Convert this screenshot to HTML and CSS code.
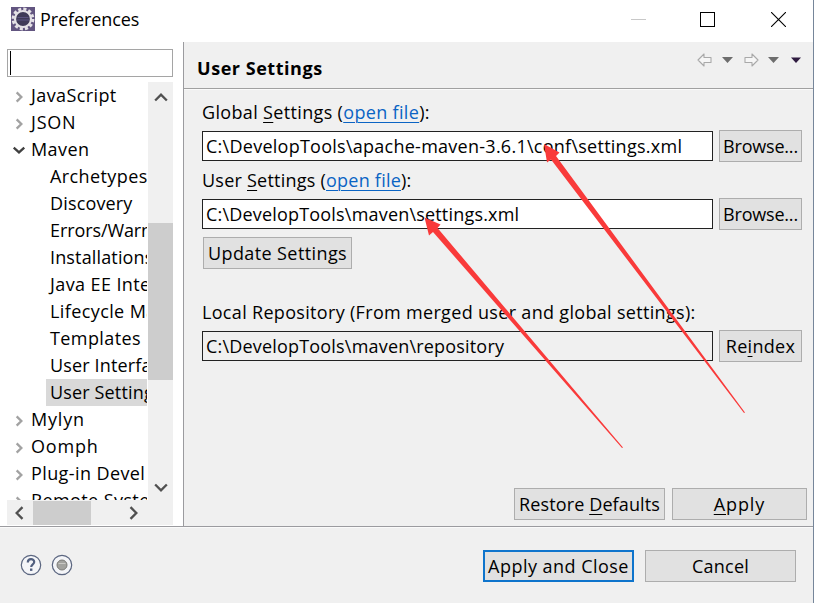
FILE: index.html
```html
<!DOCTYPE html>
<html lang="en">
<head>
<meta charset="utf-8">
<title>Preferences</title>
<link rel="stylesheet" href="styles.css">
</head>
<body>
<div class="window">
  <header class="titlebar">
    <svg class="app-icon" width="24" height="24" viewBox="0 0 24 24">
      <rect width="24" height="24" fill="#625580"/>
      <circle cx="12" cy="12" r="9.900" fill="none" stroke="#e4e1e6" stroke-width="3" stroke-dasharray="3.100 2.083"/>
      <circle cx="12" cy="12" r="8" fill="#3f3a58" stroke="#e4e1e6" stroke-width="2.200"/>
      <path d="M6.500 10.500h11M6 13h12" stroke="#5b5380" stroke-width="1"/>
    </svg>
    <h1 class="caption">Preferences</h1>
    <div class="window-controls">
      <svg width="15" height="15" viewBox="0 0 15 15"><path d="M0 7.500h15" stroke="#c8c8c8"/></svg>
      <svg width="15" height="15" viewBox="0 0 15 15"><rect x=".5" y=".5" width="14" height="14" fill="none" stroke="#000"/></svg>
      <svg width="15" height="15" viewBox="0 0 15 15"><path d="M0 0l15 15M15 0L0 15" stroke="#000" stroke-width="1.100"/></svg>
    </div>
  </header>

  <div class="main">
    <aside class="sidebar">
      <div class="filter"><span class="caret"></span></div>
      <div class="tree-pane">
        <ul class="tree">
          <li class="node"><svg class="chev" viewBox="0 0 12 12"><path d="M4 2l4 4-4 4"/></svg><span>JavaScript</span></li>
          <li class="node wide"><svg class="chev" viewBox="0 0 12 12"><path d="M4 2l4 4-4 4"/></svg><span>JSON</span></li>
          <li class="node"><svg class="chev open" viewBox="0 0 12 12"><path d="M1.500 4l4.500 4 4.500-4"/></svg><span>Maven</span></li>
          <li class="node child"><span>Archetypes</span></li>
          <li class="node child tight"><span>Discovery</span></li>
          <li class="node child narrow"><span>Errors/Warnings</span></li>
          <li class="node child tight"><span>Installations</span></li>
          <li class="node child"><span>Java EE Integration</span></li>
          <li class="node child"><span>Lifecycle Mappings</span></li>
          <li class="node child"><span>Templates</span></li>
          <li class="node child tight"><span>User Interface</span></li>
          <li class="node child selected tight"><span>User Settings</span></li>
          <li class="node wide"><svg class="chev" viewBox="0 0 12 12"><path d="M4 2l4 4-4 4"/></svg><span>Mylyn</span></li>
          <li class="node wide"><svg class="chev" viewBox="0 0 12 12"><path d="M4 2l4 4-4 4"/></svg><span>Oomph</span></li>
          <li class="node"><svg class="chev" viewBox="0 0 12 12"><path d="M4 2l4 4-4 4"/></svg><span>Plug-in Devel</span></li>
          <li class="node"><svg class="chev" viewBox="0 0 12 12"><path d="M4 2l4 4-4 4"/></svg><span>Remote Systems</span></li>
        </ul>
        <div class="vscroll">
          <svg class="sarrow" viewBox="0 0 12 12"><path d="M1 9l5-5 5 5"/></svg>
          <div class="vthumb"></div>
          <svg class="sarrow" viewBox="0 0 12 12"><path d="M1 3l5 5 5-5"/></svg>
        </div>
      </div>
      <div class="hscroll">
        <svg class="sarrow" viewBox="0 0 12 12"><path d="M9 1L4 6l5 5"/></svg>
        <div class="hthumb"></div>
        <svg class="sarrow" viewBox="0 0 12 12"><path d="M3 1l5 5-5 5"/></svg>
      </div>
    </aside>

    <section class="page">
      <div class="page-head">
        <h2 class="heading">User Settings</h2>
        <svg class="nav" width="106" height="14" viewBox="0 0 106 14">
          <g fill="#f6f6f6" stroke="#a9a9a9" stroke-width="1.100" stroke-linejoin="round">
            <path d="M1 7l6-6v3.500h7v5H7V13z"/>
            <path d="M61 7l-6-6v3.500h-7v5h7V13z"/>
          </g>
          <path d="M25 4h11l-5.500 6zM71 4h11l-5.500 6z" fill="#6d6d6d"/>
          <path d="M94 4.500h10l-5 5.500z" fill="#2f1b40"/>
        </svg>
      </div>
      <div class="form">
        <p class="label l1">Global <u>S</u>ettings (<a>open file</a>):</p>
        <div class="row"><div class="field f1">C:\DevelopTools\apache-maven-3.6.1\conf\settings.xml</div><button class="btn side">Browse...</button></div>
        <p class="label l2">User <u>S</u>ettings (<a>open file</a>):</p>
        <div class="row"><div class="field f2">C:\DevelopTools\maven\settings.xml</div><button class="btn side">Browse...</button></div>
        <button class="btn update">Update Settings</button>
        <p class="label l3">Local Repository (From merged user and global settings):</p>
        <div class="row"><div class="field readonly">C:\DevelopTools\maven\repository</div><button class="btn side reindex">Re<u>i</u>ndex</button></div>
      </div>
      <div class="page-actions">
        <button class="btn restore">Restore <u>D</u>efaults</button>
        <button class="btn apply"><u>A</u>pply</button>
      </div>
    </section>
  </div>

  <footer class="footer">
    <svg class="help" width="54" height="22" viewBox="0 0 54 22">
      <g fill="#f4f5f8" stroke="#5b6680" stroke-width="1.200"><circle cx="11" cy="11" r="9.700"/><circle cx="42" cy="11" r="9.700"/></g>
      <path d="M7.800 8.500c0-4.300 6.400-4.300 6.400-.5 0 2.300-3 2.400-3 5" fill="none" stroke="#526080" stroke-width="2.200"/>
      <rect x="10" y="14.500" width="2.400" height="2.400" fill="#526080"/>
      <circle cx="42" cy="11" r="5" fill="#a3a39f" stroke="#7c7c78"/>
      <path d="M38.500 9.500h7" stroke="#c9c9c5"/>
    </svg>
    <button class="btn primary">Apply and Close</button>
    <button class="btn cancel">Cancel</button>
  </footer>

  <svg class="annotations" width="814" height="603" viewBox="0 0 814 603">
    <path d="M544 144L559.500 152.500 556 156 745 412.500 744 413 551 159.500 547 162.500z"/>
    <path d="M424.500 217.500L440.500 224.500 437.500 228 623 447.500 622 448 433 232 429 235.500z"/>
  </svg>
</div>
</body>
</html>
```
FILE: styles.css
```css
* { box-sizing: border-box; }
body { margin: 0; font-family: "Open Sans", "Noto Sans", sans-serif; font-size: 18px; color: #000; }
h1, h2, p, ul { margin: 0; padding: 0; font-weight: 400; font-size: inherit; }
svg { display: block; flex: none; }
u { text-decoration-thickness: 1px; text-underline-offset: 3px; }

.window { position: relative; width: 814px; height: 603px; overflow: hidden; background: #f0f0f0; border-right: 1px solid #76869a; display: flex; flex-direction: column; }
.titlebar { height: 42px; flex: none; background: #fff; display: flex; align-items: center; padding: 0 27px 4px 11px; }
.caption { margin-left: 5px; line-height: 24px; flex: 1; white-space: nowrap; letter-spacing: -.1px; }
.window-controls { display: flex; gap: 54px; }
.window-controls svg:last-child { margin-left: 2px; }

.main { height: 485px; flex: none; display: flex; border-bottom: 1px solid #9b9b9f; }
.sidebar { width: 184px; flex: none; background: #fff; border-right: 1px solid #9b9b9f; padding: 7px 10px 0 7px; }
.filter { width: 166px; height: 28px; border: 1px solid #a5a5a5; padding: 1px 2px; }
.caret { display: block; width: 1px; height: 24px; background: #000; }
.tree-pane { margin-top: 5px; height: 418px; width: 166px; display: flex; justify-content: space-between; }
.tree { width: 140px; flex: none; overflow: hidden; list-style: none; letter-spacing: .4px; }
.node { height: 27px; display: flex; align-items: center; line-height: 27px; white-space: nowrap; padding-left: 5px; }
.node span { padding-left: 5px; }
.wide { letter-spacing: .8px; }
.tight { letter-spacing: .15px; }
.narrow { letter-spacing: -.1px; }
.child { padding-left: 39px; }
.child span { padding-left: 4px; }
.selected span { background: #d9d9d9; flex: none; }
.chev { width: 14px; height: 14px; fill: none; stroke: #a2a2a2; stroke-width: 2; margin-top: 3px; }
.chev.open { stroke: #404040; margin-top: 1px; }
.vscroll { width: 25px; background: #f0f0f0; display: flex; flex-direction: column; align-items: center; padding: 8px 0 5px; }
.sarrow { width: 14px; height: 14px; fill: none; stroke: #505050; stroke-width: 2; }
.vthumb { width: 25px; height: 157px; margin: 119px 0 auto; background: #cdcdcd; }
.hscroll { height: 25px; width: 166px; background: #f0f0f0; display: flex; align-items: center; padding-left: 5px; }
.hthumb { width: 58px; height: 24px; margin: 0 36px 0 7px; background: #cdcdcd; }

.page { flex: 1; display: flex; flex-direction: column; }
.page-head { height: 47px; border-bottom: 1px solid #a0a0a0; box-shadow: 0 1px #fafafa; display: flex; justify-content: space-between; padding: 11px 10px 0 13px; flex: none; }
.heading { font-weight: 700; line-height: 30px; letter-spacing: .54px; }
.form { padding: 8px 11px 0 18px; flex: 1; }
.label { line-height: 30px; height: 30px; white-space: nowrap; }
.label a { color: #0a64c4; text-decoration: underline; text-decoration-thickness: 1px; text-underline-offset: 3px; }
.l1 { letter-spacing: .34px; }
.l2 { letter-spacing: .23px; }
.l3 { margin-top: 28px; letter-spacing: .32px; }
.row { display: flex; align-items: center; gap: 6px; height: 38px; }
.field { width: 511px; height: 30px; border: 1px solid #222; background: #fff; line-height: 28px; padding-left: 3px; white-space: nowrap; letter-spacing: .19px; }
.f1 { letter-spacing: .26px; }
.field.readonly { background: #f0f0f0; }
.btn { font: inherit; color: inherit; border: 1px solid #adadad; border-radius: 0; background: #e1e1e1; height: 32px; padding: 0; line-height: 28px; white-space: nowrap; text-align: center; flex: none; }
.side { width: 83px; letter-spacing: -.2px; }
.reindex { letter-spacing: .3px; }
.update { width: 149px; display: block; margin: 4px 0 0 1px; letter-spacing: .4px; }
.page-actions { display: flex; justify-content: flex-end; gap: 7px; padding: 0 6px 6px 0; }
.restore { width: 151px; letter-spacing: .13px; }
.apply { width: 135px; letter-spacing: .9px; }
.footer { flex: 1; display: flex; align-items: flex-start; padding: 23px 17px 0 20px; box-shadow: inset 0 1px #fafafa; }
.help { margin: 4px auto 0 0; }
.primary { width: 151px; border: 2px solid #0e74cc; margin-right: 11px; letter-spacing: .47px; }
.cancel { width: 151px; letter-spacing: .25px; }
.annotations { position: absolute; left: 0; top: 0; fill: #f93a3a; pointer-events: none; }
```
